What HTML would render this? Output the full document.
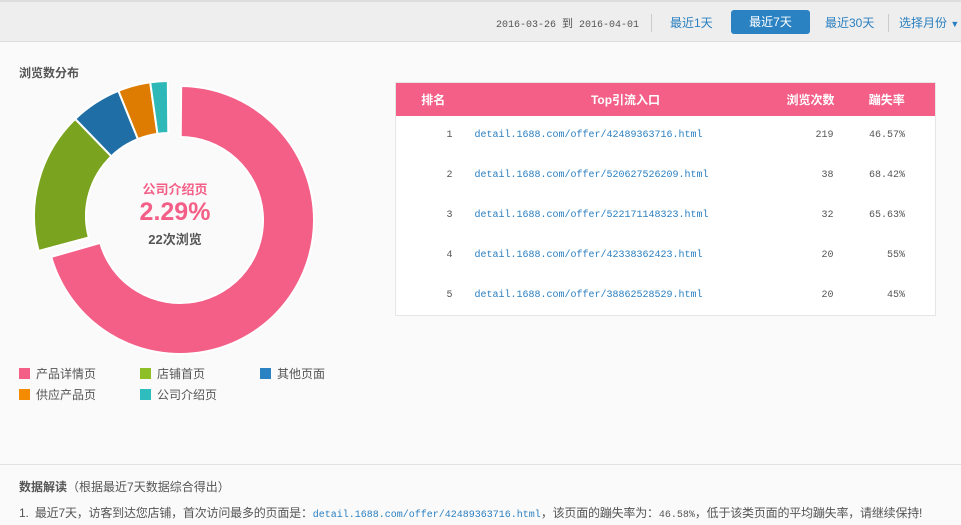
<!DOCTYPE html>
<html><head><meta charset="utf-8"><style>
*{margin:0;padding:0;box-sizing:border-box}
body{width:961px;height:525px;overflow:hidden;background:#fafafa;font-family:"Liberation Sans","Noto Sans CJK SC",sans-serif;font-size:12px;color:#555;position:relative}
.top{position:absolute;left:0;top:0;width:961px;height:42px;background:#eeeeee;border-top:2px solid #ddd;border-bottom:1px solid #ddd}
.a{position:absolute;top:12px;font-size:12px;color:#2a7fc0}
.sep{position:absolute;top:12px;width:1px;height:18px;background:#ccc}
.btn{position:absolute;left:731px;top:8px;width:79px;height:24px;background:#2a82c3;color:#fff;border-radius:3px;text-align:center;line-height:24px;font-size:12px}
.mono{font-family:"Liberation Mono","Noto Sans CJK SC",monospace;font-size:10px}
.t{position:absolute}
table{position:absolute;left:395px;top:82px;width:540px;border-collapse:collapse;background:#fff;border:1px solid #e6e6e6;table-layout:fixed}
th{background:#f45f87;color:#fff;height:33px;font-size:12px;font-weight:bold}
td{height:40px;font-family:"Liberation Mono",monospace;font-size:10px;color:#555}
td.l{color:#2a7fc0;padding-left:4px}
td.n{text-align:right;padding-right:17px}
td.r{text-align:right;padding-right:30px}
td.k{text-align:right;padding-right:18px}
.lg{position:absolute;font-size:12px;color:#555}
.lg i{display:inline-block;width:11px;height:11px;margin-right:6px;vertical-align:-1px}
.bot{position:absolute;left:0;top:464px;width:961px;height:61px;border-top:1px solid #e2e2e2}
</style></head><body>
<div class="top">
<span class="t mono" style="left:496px;top:13px;color:#555">2016-03-26 <span style="font-family:'Noto Sans CJK SC';font-size:11px">到</span> 2016-04-01</span>
<div class="sep" style="left:651px"></div>
<span class="a" style="left:670px">最近1天</span>
<div class="btn">最近7天</div>
<span class="a" style="left:825px">最近30天</span>
<div class="sep" style="left:888px"></div>
<span class="a" style="left:899px">选择月份 <span style="font-size:9px">▼</span></span>
</div>
<div class="t" style="left:19px;top:64px;font-weight:bold;font-size:12px;color:#555">浏览数分布</div>
<svg class="t" style="left:0;top:0" width="380" height="420" id="sv"></svg>
<div class="t" style="left:110px;top:179px;width:130px;text-align:center;color:#f45f87;font-weight:bold;font-size:13px">公司介绍页</div>
<div class="t" style="left:110px;top:198px;width:130px;text-align:center;color:#f45f87;font-weight:bold;font-size:25px">2.29%</div>
<div class="t" style="left:110px;top:229px;width:130px;text-align:center;color:#555;font-weight:bold;font-size:13px">22次浏览</div>
<div class="lg" style="left:19px;top:365px"><i style="background:#f45f87"></i>产品详情页</div>
<div class="lg" style="left:140px;top:365px"><i style="background:#8fbf27"></i>店铺首页</div>
<div class="lg" style="left:260px;top:365px"><i style="background:#2a82c3"></i>其他页面</div>
<div class="lg" style="left:19px;top:386px"><i style="background:#f58b00"></i>供应产品页</div>
<div class="lg" style="left:140px;top:386px"><i style="background:#2fbcbc"></i>公司介绍页</div>
<table>
<colgroup><col style="width:75px"><col style="width:310px"><col style="width:70px"><col style="width:85px"></colgroup>
<tr><th>排名</th><th style="padding-left:0">Top引流入口</th><th style="text-align:right;padding-right:16px">浏览次数</th><th style="text-align:center;padding-right:12px">蹦失率</th></tr>
<tr><td class="k">1</td><td class="l">detail.1688.com/offer/42489363716.html</td><td class="n">219</td><td class="r">46.57%</td></tr>
<tr><td class="k">2</td><td class="l">detail.1688.com/offer/520627526209.html</td><td class="n">38</td><td class="r">68.42%</td></tr>
<tr><td class="k">3</td><td class="l">detail.1688.com/offer/522171148323.html</td><td class="n">32</td><td class="r">65.63%</td></tr>
<tr><td class="k">4</td><td class="l">detail.1688.com/offer/42338362423.html</td><td class="n">20</td><td class="r">55%</td></tr>
<tr><td class="k">5</td><td class="l">detail.1688.com/offer/38862528529.html</td><td class="n">20</td><td class="r">45%</td></tr>
</table>
<div class="bot">
<div class="t" style="left:19px;top:13px;font-size:12px"><b>数据解读</b>（根据最近7天数据综合得出）</div>
<div class="t" style="left:19px;top:39px;font-size:12px;white-space:nowrap;letter-spacing:-0.2px">1.&nbsp;&nbsp;最近7天，访客到达您店铺，首次访问最多的页面是：<span class="mono" style="color:#2a7fc0;letter-spacing:0">detail.1688.com/offer/42489363716.html</span>，该页面的蹦失率为：<span class="mono" style="letter-spacing:0">46.58%</span>，低于该类页面的平均蹦失率，请继续保持!</div>
</div>
<script>
function arc(cx,cy,R,r,a0,a1,c){function p(rad,a){a=(a-90)*Math.PI/180;return [cx+rad*Math.cos(a),cy+rad*Math.sin(a)]}
var l=(a1-a0)>180?1:0,A=p(R,a0),B=p(R,a1),C=p(r,a1),D=p(r,a0);
return '<path fill="'+c+'" stroke="#fff" stroke-width="2" d="M'+A+'A'+R+','+R+' 0 '+l+' 1 '+B+'L'+C+'A'+r+','+r+' 0 '+l+' 0 '+D+'Z"/>';}
var s=arc(180,220,134,83,0.5,254,'#f45f87');
s+=arc(169,216,135,83,255,316,'#7aa41f');
s+=arc(169,216,135,83,316,338,'#1f6fa6');
s+=arc(169,216,135,83,338,352,'#dd7c00');
s+=arc(169,216,135,83,352,359.5,'#2fb8b8');
document.getElementById('sv').innerHTML=s;
</script>
</body></html>
